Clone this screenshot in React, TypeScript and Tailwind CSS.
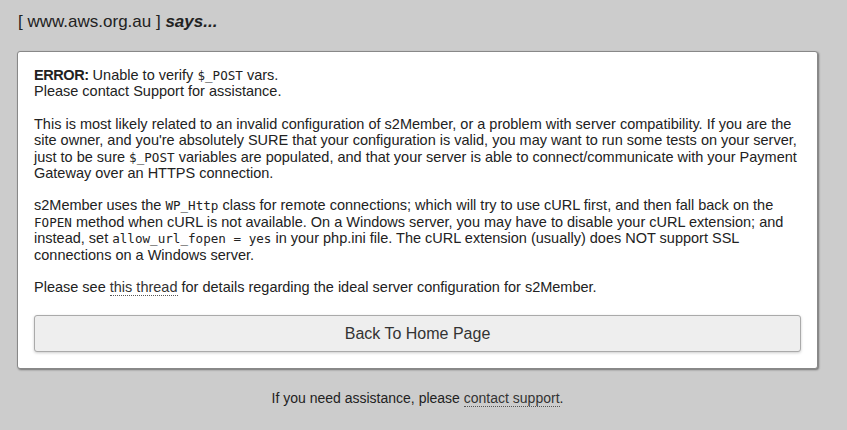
export default function App() {
  const mono = "font-['DejaVu_Sans_Mono',monospace] text-[12.6px] leading-none";
  return (
    <div className="min-h-[430px] bg-[#cccccc] px-[17px] pt-[11px] pb-6 font-['Liberation_Sans',Arial,sans-serif] text-[#222]">
      <h1 className="pl-px text-[17px] leading-[22px] text-[#222]">
        [ www.aws.org.au ] <em className="font-bold">says...</em>
      </h1>

      <div className="mt-[18px] w-[801px] rounded-[3px] border border-[#888] bg-white px-4 pt-[15px] pb-4 shadow-[1px_1px_2px_rgba(0,0,0,0.45)]">
        <div className="whitespace-nowrap text-[14.5px] leading-[16.4px]">
          <p className="mb-[15px]">
            <strong className="tracking-[-0.03em]">ERROR:</strong> Unable to verify{" "}
            <span className={mono}>$_POST</span> vars.
            <br />
            Please contact Support for assistance.
          </p>
          <p className="mb-4 pt-px">
            This is most likely related to an invalid configuration of s2Member, or a problem with server
            compatibility. If you are the
            <br />
            site owner, and you're absolutely SURE that your configuration is valid, you may want to run some tests
            on your server,
            <br />
            just to be sure <span className={mono}>$_POST</span> variables are populated, and that your server is
            able to connect/communicate with your Payment
            <br />
            Gateway over an HTTPS connection.
          </p>
          <p className="mb-4">
            s2Member uses the <span className={mono}>WP_Http</span> class for remote connections; which will try to
            use cURL first, and then fall back on the
            <br />
            <span className={mono}>FOPEN</span> method when cURL is not available. On a Windows server, you may have
            to disable your cURL extension; and
            <br />
            instead, set <span className={mono}>allow_url_fopen = yes</span> in your php.ini file. The cURL
            extension (usually) does NOT support SSL
            <br />
            connections on a Windows server.
          </p>
          <p>
            Please see{" "}
            <a href="#" className="border-b border-dotted border-[#555] text-[#333]">
              this thread
            </a>{" "}
            for details regarding the ideal server configuration for s2Member.
          </p>
        </div>

        <button
          type="button"
          className="mt-[20px] flex h-[37px] w-full items-center justify-center rounded-[3px] border border-[#aaa] bg-[#eeeeee] text-[16px] text-[#333] shadow-[0_1px_3px_rgba(0,0,0,0.2)]"
        >
          Back To Home Page
        </button>
      </div>

      <p className="mt-[20px] w-[801px] text-center text-[14px] leading-[18px] text-[#222]">
        If you need assistance, please{" "}
        <a href="#" className="border-b border-dotted border-[#555] text-[#333]">
          contact support
        </a>
        .
      </p>
    </div>
  );
}
